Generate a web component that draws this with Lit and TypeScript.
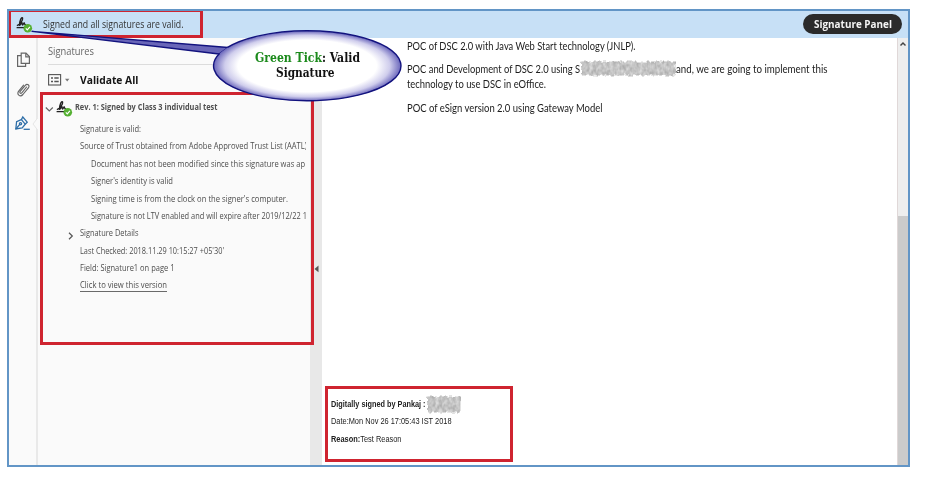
import { LitElement, html, svg, css } from "lit";
import { customElement, property } from "lit/decorators.js";

/** One line of text condensed or widened to a fixed measure. */
@customElement("fit-line")
class FitLine extends LitElement {
  @property({ type: Number }) w = 100;

  static styles = css`
    :host { display: inline-block; white-space: nowrap; }
    .run { display: inline-block; transform-origin: 0 50%; white-space: pre; }
  `;

  render() {
    return html`<span class="run"><slot></slot></span>`;
  }

  firstUpdated() {
    this.fit();
    document.fonts.ready.then(() => this.fit());
  }

  fit() {
    const run = this.renderRoot.querySelector(".run") as HTMLElement;
    run.style.transform = "none";
    this.style.width = "auto";
    const natural = run.getBoundingClientRect().width;
    if (natural > 0) run.style.transform = `scaleX(${this.w / natural})`;
    this.style.width = `${this.w}px`;
  }
}

const signIcon = svg`
  <path d="M.6 11.6H8" stroke="#222" stroke-width="1.3" fill="none"/>
  <path d="M1.4 9.4C3.8 8.6 7 4.4 6.6 2C5.6 .2 3.4 4.6 3.6 9.2C4.6 9.4 5 6.6 5.8 6.3C6.4 6.6 5.8 8.8 6.6 9C7.4 9 7.4 7 8.1 6.8C8.7 7.2 8.3 8.8 9.4 8.8" stroke="#222" stroke-width="1.4" fill="none" stroke-linecap="round"/>
  <circle cx="11.8" cy="12.3" r="4.3" fill="#55b032"/>
  <path d="M9.8 12.4L11.3 13.9L13.9 10.9" stroke="#fff" stroke-width="1.2" fill="none"/>`;

const details: Array<{ text: string; w: number; kind: string }> = [
  { text: "Signature is valid:", w: 61, kind: "" },
  { text: "Source of Trust obtained from Adobe Approved Trust List (AATL)", w: 227, kind: "" },
  { text: "Document has not been modified since this signature was ap", w: 214, kind: "sub" },
  { text: "Signer's identity is valid", w: 82, kind: "sub" },
  { text: "Signing time is from the clock on the signer's computer.", w: 197, kind: "sub" },
  { text: "Signature is not LTV enabled and will expire after 2019/12/22 1", w: 216, kind: "sub" },
  { text: "Signature Details", w: 58.5, kind: "node" },
  { text: "Last Checked: 2018.11.29 10:15:27 +05'30'", w: 144, kind: "" },
  { text: "Field: Signature1 on page 1", w: 94.5, kind: "" },
  { text: "Click to view this version", w: 87, kind: "link" },
];

@customElement("app-root")
class AppRoot extends LitElement {
  static styles = css`
    :host {
      display: block; position: relative; width: 945px; height: 479px;
      background: #fff; overflow: hidden; box-sizing: border-box; padding: 9px 0 0 7px;
      font-family: "Open Sans", "Noto Sans", sans-serif; color: #4d4d4d;
    }
    svg { display: block; flex: none; }
    .frame {
      box-sizing: border-box; width: 903px; height: 458px; border: 2px solid #6295c6;
      display: flex; flex-direction: column;
    }
    .banner {
      height: 27px; flex: none; background: #c7e0f6; display: flex; align-items: center;
      padding: 0 6px 0 7px; font-size: 10.2px; color: #333;
    }
    .banner svg { margin-right: 9.5px; margin-top: -1px; }
    .banner > fit-line { margin-top: -2px; }
    .pill {
      margin-left: auto; height: 20px; width: 99px; border-radius: 10px; background: #2b2b2b;
      color: #f4f4f4; font-size: 11px; font-weight: 700; display: flex;
      align-items: center; justify-content: center; margin-top: -1px;
    }
    .pill fit-line { margin-top: -1px; }
    .main { flex: 1; display: flex; min-height: 0; }
    .rail {
      background: #fafafa; border-right: 2px solid #e9e9e9; display: flex; flex: none;
      flex-direction: column; align-items: center; padding-top: 13px; box-sizing: border-box; width: 29px;
    }
    .rail svg { margin-left: 1px; }
    .rail svg + svg { margin-top: 13px; }
    .rail svg + svg + svg { margin-top: 17px; }
    .rail .pen { margin-left: 0; }
    .rail .notch { position: absolute; left: 32px; top: 117px; margin: 0 !important; }
    .panel { width: 272px; flex: none; background: #fafafa; display: flex; flex-direction: column; }
    .head { height: 27px; box-sizing: border-box; margin-left: 10px; border-bottom: 1px solid #dcdcdc; font-size: 10.6px; line-height: 26px; color: #666; }
    .tools { height: 29px; display: flex; align-items: center; padding-left: 10px; font-size: 11px; font-weight: 700; color: #151515; }
    .tools svg { margin-right: 9px; }
    .tools fit-line { margin-top: -1px; }
    .rev { height: 27px; display: flex; align-items: center; padding-left: 7px; font-size: 8.7px; font-weight: 700; color: #505050; }
    .rev .chev { margin: 2px 1.5px 0 0; }
    .rev .mark { margin: 1px 2px 0 0; }
    .rev fit-line { margin-top: -1px; margin-left: .5px; }
    .list { display: flex; flex-direction: column; font-size: 8.8px; padding-top: 0; width: 268px; overflow: hidden; }
    .row { height: 17.4px; line-height: 17.4px; padding-left: 42px; display: flex; align-items: center; flex: none; }
    .sub { padding-left: 52.5px; }
    .node { padding-left: 30px; }
    .node svg { margin: 3px 6.5px 0 0; }
    .link fit-line { line-height: 11px; height: 11px; border-bottom: 1px solid #6a6a6a; }
    .gutter { width: 12px; flex: none; background: #e8e8e8; display: flex; align-items: flex-start; }
    .gutter svg { margin: 227px 0 0 4px; }
    .doc {
      flex: 1; min-width: 0; box-sizing: border-box; padding: 0 0 0 85px; display: flex; flex-direction: column;
      font-family: Lato, "Open Sans", sans-serif; font-size: 11px; font-weight: 400; line-height: 15px; color: #1c1c1c;
    }
    .doc p { margin: 0; display: flex; flex-direction: column; height: 15px; }
    .doc .second { height: 30px; margin: 8px 0 9px; }
    .mixed { display: flex; align-items: center; height: 15px; }
    .stamp {
      margin: 281px 0 0 -76px; font-family: "Liberation Sans", Arial, sans-serif; font-size: 9.3px;
      line-height: 17.4px; color: #222; display: flex; flex-direction: column;
    }
    .stamp div { display: flex; height: 17.4px; align-items: center; }
    .scroll { width: 11px; flex: none; background: #eee; border-left: 1px solid #e0d8d8; box-sizing: border-box; display: flex; flex-direction: column; }
    .scroll svg { margin: 3px 0 0 1px; }
    .thumb { margin-top: auto; height: 249px; background: #cbcbcb; }
    .mark-box { position: absolute; box-sizing: border-box; border: 3px solid #cf2430; }
    .mb-banner { left: 9px; top: 11px; width: 194px; height: 27px; border-width: 1px 3px 3px 2px; }
    .mb-panel { left: 40px; top: 92px; width: 274px; height: 253px; }
    .mb-stamp { left: 325px; top: 386px; width: 188px; height: 76px; }
    .callout { position: absolute; left: 0; top: 0; }
    .bubble {
      position: absolute; left: 213px; top: 51px; width: 188px; display: flex; flex-direction: column;
      align-items: center; font-family: "DejaVu Serif Condensed", "DejaVu Serif", serif;
      font-stretch: condensed; font-weight: 700; font-size: 12px; line-height: 15px; color: #111;
    }
    .bubble fit-line + fit-line { margin-left: -4px; }
    .green { color: #1c8a1c; }
  `;

  /** Grainy grey smear laid over redacted names. */
  smear(id: string, w: number, h: number) {
    return html`<svg width=${w} height=${h} viewBox="0 0 ${w} ${h}">
      <defs><filter id=${id} x="0" y="0" width="100%" height="100%" color-interpolation-filters="sRGB">
        <feTurbulence type="fractalNoise" baseFrequency="0.3 0.2" numOctaves="2" seed="4" result="n"/>
        <feColorMatrix in="n" type="matrix" values="0.3 0 0 0 0.62  0.3 0 0 0 0.62  0.3 0 0 0 0.62  0 0 0 0 1" result="g"/>
        <feDisplacementMap in="SourceGraphic" in2="n" scale="5" xChannelSelector="R" yChannelSelector="G" result="s"/>
        <feComposite in="g" in2="s" operator="in"/>
      </filter></defs>
      <g filter="url(#${id})"><rect width=${w} height=${h} fill="none"/><rect x="1" y="1.5" width=${w - 1.5} height=${h - 3} rx="1" fill="#bbb"/></g>
    </svg>`;
  }

  render() {
    return html`
      <div class="frame">
        <div class="banner">
          <svg width="17" height="17" viewBox="0 0 17 17">${signIcon}</svg>
          <fit-line w="140.5">Signed and all signatures are valid.</fit-line>
          <div class="pill"><fit-line w="78">Signature Panel</fit-line></div>
        </div>
        <div class="main">
          <div class="rail">
            <svg width="15" height="17" viewBox="0 0 15 17" fill="none" stroke="#666" stroke-width="1.2">
              <path d="M5.2 2.2H10L13.4 5.5V12.4H5.2Z"/><path d="M9.8 2.2V5.8H13.4"/><path d="M5 4.6H1.6V15.4H9.6V12.6"/>
            </svg>
            <svg width="15" height="17" viewBox="0 0 15 17" fill="none" stroke="#666" stroke-width="1.15" stroke-linecap="round">
              <path d="M10.6 6L5.8 11.8C4.7 13.1 3.1 11.8 4.2 10.4L9.3 4.3C11.2 2 14.3 4.4 12.4 6.8L6.9 13.5C4.2 16.6 .1 13.3 2.7 10.1L7.6 4.2"/>
            </svg>
            <svg class="pen" width="17" height="17" viewBox="0 0 17 17" fill="none" stroke="#2f6fa8" stroke-width="1.3">
              <path d="M1.8 14L2.6 6.6L7.4 4.6L11.2 9.2L8.2 13Z"/><path d="M7.4 4.6L8.8 2L13.2 7.2L11.2 9.2M1.8 14L5.8 9.4"/><circle cx="6.5" cy="8.8" r="1.1"/><path d="M9.6 14.3H15.8"/>
            </svg>
            <svg class="notch" width="6" height="14" viewBox="0 0 6 14"><path d="M6 .5L1 7L6 13.5" fill="#fafafa" stroke="#e6e6e6"/></svg>
          </div>
          <div class="panel">
            <div class="head"><fit-line w="46">Signatures</fit-line></div>
            <div class="tools">
              <svg width="23" height="12" viewBox="0 0 23 12">
                <rect x=".6" y=".6" width="12" height="10.4" fill="none" stroke="#555" stroke-width="1.1"/>
                <path d="M3 4H5M6.3 4H10.7M3 7.5H5M6.3 7.5H10.7" stroke="#555" stroke-width="1.3"/>
                <path d="M17 4.8H21.4L19.2 7.6Z" fill="#777"/>
              </svg>
              <fit-line w="58.5">Validate All</fit-line>
            </div>
            <div class="rev">
              <svg class="chev" width="9" height="8" viewBox="0 0 9 8"><path d="M.8 2.5L4.3 6L7.8 2.5" fill="none" stroke="#666" stroke-width="1.2"/></svg>
              <svg class="mark" width="17" height="17" viewBox="0 0 17 17">${signIcon}</svg>
              <fit-line w="142.5">Rev. 1: Signed by Class 3 individual test</fit-line>
            </div>
            <div class="list">
              ${details.map(
                (d) => html`<div class="row ${d.kind}">
                  ${d.kind === "node"
                    ? html`<svg width="5.5" height="8" viewBox="0 0 5.5 8"><path d="M1 .8L4.3 4L1 7.2" fill="none" stroke="#555" stroke-width="1.2"/></svg>`
                    : ""}<fit-line w=${d.w}>${d.text}</fit-line>
                </div>`
              )}
            </div>
          </div>
          <div class="gutter"><svg width="5" height="8" viewBox="0 0 5 8"><path d="M4.5 .6V7.2L.5 3.9Z" fill="#555"/></svg></div>
          <div class="doc">
            <p class="first"><fit-line w="228.5">POC of DSC 2.0 with Java Web Start technology (JNLP).</fit-line></p>
            <p class="second">
              <span class="mixed"><fit-line w="173">POC and Development of DSC 2.0 using S</fit-line>${this.smear("smear-a", 96, 17)}<fit-line w="151.5">and, we are going to implement this</fit-line></span>
              <fit-line w="139">technology to use DSC in eOffice.</fit-line>
            </p>
            <p class="third"><fit-line w="195.5">POC of eSign version 2.0 using Gateway Model</fit-line></p>
            <div class="stamp">
              <div><fit-line w="94.5"><b>Digitally signed by Pankaj :</b></fit-line>${this.smear("smear-b", 35, 19)}</div>
              <div><fit-line w="120.5">Date:Mon Nov 26 17:05:43 IST 2018</fit-line></div>
              <div><fit-line w="70.5"><b>Reason:</b>Test Reason</fit-line></div>
            </div>
          </div>
          <div class="scroll">
            <svg width="8" height="6" viewBox="0 0 8 6"><path d="M1.5 4.6L4 2L6.5 4.6" fill="none" stroke="#444" stroke-width="1.4"/></svg>
            <div class="thumb"></div>
          </div>
        </div>
      </div>
      <div class="mark-box mb-banner"></div>
      <div class="mark-box mb-panel"></div>
      <div class="mark-box mb-stamp"></div>
      <svg class="callout" width="420" height="110" viewBox="0 0 420 110">
        <defs><radialGradient id="glow" cx=".5" cy=".5" r=".5">
          <stop offset="0" stop-color="#fff"/><stop offset=".74" stop-color="#fff"/>
          <stop offset=".88" stop-color="#cfcdec"/><stop offset="1" stop-color="#6a66bb"/>
        </radialGradient></defs>
        <path d="M32 31.3L228 47.5L219 54Z" fill="#6966b8" stroke="#12127e" stroke-width="1.3" stroke-linejoin="round"/>
        <ellipse cx="307.3" cy="66" rx="93.7" ry="35" fill="url(#glow)"/>
        <path d="M219.5 53.5A93.7 35 0 1 0 227.5 47.4" fill="none" stroke="#12127e" stroke-width="1.4"/>
      </svg>
      <div class="bubble">
        <fit-line w="105"><span class="green">Green Tick</span>: Valid</fit-line>
        <fit-line w="58.5">Signature</fit-line>
      </div>
    `;
  }
}
